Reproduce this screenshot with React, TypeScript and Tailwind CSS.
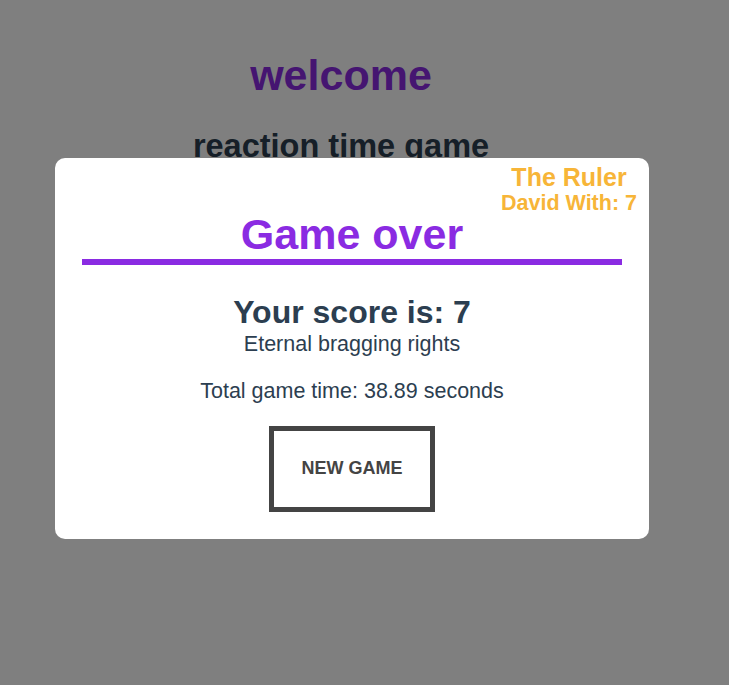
import React from 'react';

export default function App() {
  const font = { fontFamily: '"Liberation Sans", Arial, sans-serif' };

  return (
    <div className="relative min-h-screen w-full bg-white" style={font}>
      {/* page underneath the modal */}
      <div className="w-[682px] pt-[50px] text-center">
        <h1 className="text-[43px] leading-[50px] font-bold text-[#8a2be2]">welcome</h1>
        <h2 className="mt-[28px] text-[32.5px] leading-[37px] font-bold text-[#2c3e50]">reaction time game</h2>
      </div>

      {/* overlay */}
      <div className="absolute inset-0 bg-black/50">
        <div className="relative ml-[55px] mt-[158px] w-[594px] rounded-[10px] bg-white px-[27px] pt-[51px] pb-[27px] text-center">
          <div className="absolute right-[12px] top-[5px] text-center font-bold text-[#f7b538]">
            <div className="text-[25px] leading-[29px]">The Ruler</div>
            <div className="text-[21.5px] leading-[22px]">David With: 7</div>
          </div>

          <h3 className="text-[43px] leading-[50px] font-bold text-[#8a2be2]">Game over</h3>
          <div className="h-[6px] w-full bg-[#8a2be2]" />

          <div className="mt-[28.5px] text-[32px] leading-[37px] font-bold text-[#2c3e50]">Your score is: 7</div>
          <div className="mt-[1px] text-[21.5px] leading-[25px] text-[#2c3e50]">Eternal bragging rights</div>
          <div className="mt-[22px] text-[21.5px] leading-[25px] text-[#2c3e50]">Total game time: 38.89 seconds</div>

          <div className="mt-[22px] flex justify-center">
            <button className="flex h-[86px] w-[166px] items-center justify-center border-[5px] border-[#444444] bg-white text-[18px] font-bold text-[#444444]">
              NEW GAME
            </button>
          </div>
        </div>
      </div>
    </div>
  );
}
